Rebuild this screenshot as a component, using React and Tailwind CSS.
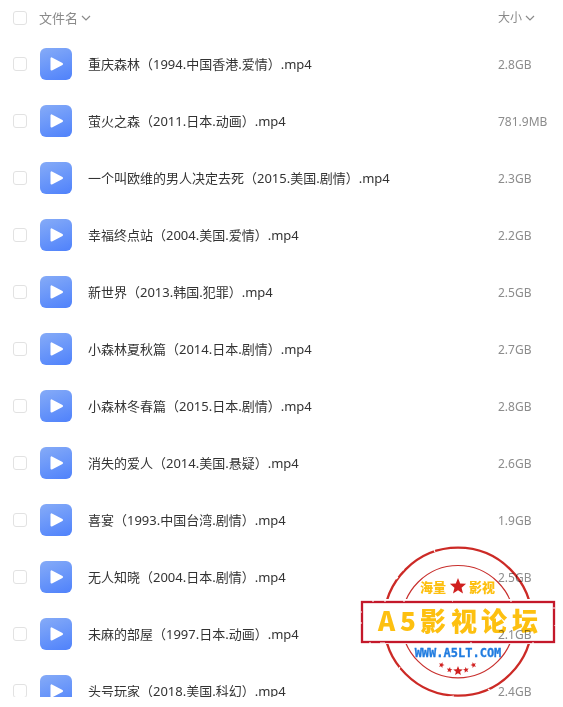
import React from "react";

const files = [
  { name: "重庆森林（1994.中国香港.爱情）.mp4", size: "2.8GB" },
  { name: "萤火之森（2011.日本.动画）.mp4", size: "781.9MB" },
  { name: "一个叫欧维的男人决定去死（2015.美国.剧情）.mp4", size: "2.3GB" },
  { name: "幸福终点站（2004.美国.爱情）.mp4", size: "2.2GB" },
  { name: "新世界（2013.韩国.犯罪）.mp4", size: "2.5GB" },
  { name: "小森林夏秋篇（2014.日本.剧情）.mp4", size: "2.7GB" },
  { name: "小森林冬春篇（2015.日本.剧情）.mp4", size: "2.8GB" },
  { name: "消失的爱人（2014.美国.悬疑）.mp4", size: "2.6GB" },
  { name: "喜宴（1993.中国台湾.剧情）.mp4", size: "1.9GB" },
  { name: "无人知晓（2004.日本.剧情）.mp4", size: "2.5GB" },
  { name: "未麻的部屋（1997.日本.动画）.mp4", size: "2.1GB" },
  { name: "头号玩家（2018.美国.科幻）.mp4", size: "2.4GB" },
];

function Checkbox({ label }) {
  return (
    <input
      type="checkbox"
      aria-label={label}
      className="block size-3.5 appearance-none rounded-[3px] border border-[#e2e2e2] bg-white checked:border-[#5a8bfa] checked:bg-[#5a8bfa]"
    />
  );
}

function Chevron() {
  return (
    <svg viewBox="0 0 10 10" className="size-2.5" fill="none" stroke="#8a8a8a" strokeWidth="1.2" aria-hidden="true">
      <path d="M1 3l4 4 4-4" />
    </svg>
  );
}

function VideoIcon() {
  return (
    <span className="flex size-8 shrink-0 items-center justify-center rounded-md bg-linear-160 from-[#86abf7] to-[#4f81fb]">
      <svg viewBox="0 0 32 32" className="size-8" aria-hidden="true">
        <path d="M11.5 10.4v11.2L22 16z" fill="#fff" stroke="#fff" strokeWidth="2" strokeLinejoin="round" />
      </svg>
    </span>
  );
}

function Star({ cx, cy, r, turn = 0 }) {
  const points = Array.from({ length: 10 }, (_, i) => {
    const a = ((i * 36 - 90 + turn) * Math.PI) / 180;
    const d = i % 2 ? r * 0.44 : r;
    return `${(cx + d * Math.cos(a)).toFixed(2)},${(cy + d * Math.sin(a)).toFixed(2)}`;
  }).join(" ");
  return <polygon points={points} fill="#d0201f" />;
}

function Stamp() {
  return (
    <svg
      viewBox="0 0 196 154"
      className="pointer-events-none absolute right-[7px] bottom-2 h-[154px] w-[196px] mix-blend-multiply"
      role="img"
      aria-label="A5影视论坛"
    >
      <circle cx="98" cy="76.7" r="74" fill="none" stroke="#cc2a26" strokeWidth="2.3" />
      <circle cx="98" cy="76.7" r="56.2" fill="none" stroke="#c8302e" strokeWidth="1.2" />
      <path
        d="M74 5l1 2M42 24l2 1M38 32l-2 2M34 42l2 1M150 19l1 2M88 152l6-1M128 144l3 2M40 122l-1 2M107 19l1 1"
        stroke="#fff"
        strokeWidth="1.2"
      />
      <rect x="0" y="54" width="196" height="45" fill="#fff" />
      <rect x="2" y="57" width="192" height="40" fill="none" stroke="#c4182a" strokeWidth="2.3" />
      <path
        d="M12 56h2M24 56l2 0M43 56h2M92 56h1M1 67h1M1 77v2M194 62v2M195 80v1M110 98h2M20 98h5M9 98h2M150 56h2M172 98h2"
        stroke="#fff"
        strokeWidth="1"
      />
      <g className="font-['Noto_Sans_CJK_SC',sans-serif] font-black" fill="#fdc010">
        <text x="60" y="47" fontSize="13">海量</text>
        <text x="109" y="47" fontSize="13">影视</text>
        <text x="18 40 60 91 121 152" y="86" fontSize="26">A5影视论坛</text>
      </g>
      <Star cx={98} cy={41.5} r={8.5} />
      <text
        x="98"
        y="112"
        textAnchor="middle"
        fontSize="12"
        fill="#207ce0"
        stroke="#207ce0"
        strokeWidth="0.3"
        className="font-['DejaVu_Sans_Mono',monospace] font-bold"
      >
        WWW.A5LT.COM
      </text>
      <Star cx={81.5} cy={120} r={3} turn={20} />
      <Star cx={89.5} cy={125} r={3} turn={10} />
      <Star cx={98} cy={126} r={5} />
      <Star cx={106} cy={125} r={3} turn={-10} />
      <Star cx={113.5} cy={120} r={3} turn={-20} />
    </svg>
  );
}

export default function App() {
  return (
    <main className="relative isolate h-screen bg-white pb-2.5 font-['Noto_Sans','Noto_Sans_CJK_SC',sans-serif] text-[13px] leading-5">
      <div className="h-full overflow-hidden">
        <table className="w-full table-fixed border-collapse text-left">
          <thead>
            <tr className="h-[35px] text-[#8a8a8a]">
              <th className="w-10 pt-px pl-[13px]">
                <Checkbox label="全选" />
              </th>
              <th className="pt-px font-normal">
                <button type="button" className="-ml-px flex items-center gap-[3px]">
                  文件名
                  <Chevron />
                </button>
              </th>
              <th className="w-[65px] pt-px text-xs/5 font-normal">
                <button type="button" className="flex items-center gap-[3px]">
                  大小
                  <Chevron />
                </button>
              </th>
            </tr>
          </thead>
          <tbody>
            {files.map((file) => (
              <tr key={file.name}>
                <td className="pt-[13px] pb-3 pl-[13px]">
                  <Checkbox label={file.name} />
                </td>
                <td className="pt-[13px] pb-3">
                  <div className="flex items-center gap-4 text-[#333]">
                    <VideoIcon />
                    <span className="truncate">{file.name}</span>
                  </div>
                </td>
                <td className="pt-3.5 pb-[11px] text-xs/5 text-[#8c8c8c]">{file.size}</td>
              </tr>
            ))}
          </tbody>
        </table>
      </div>
      <Stamp />
    </main>
  );
}
